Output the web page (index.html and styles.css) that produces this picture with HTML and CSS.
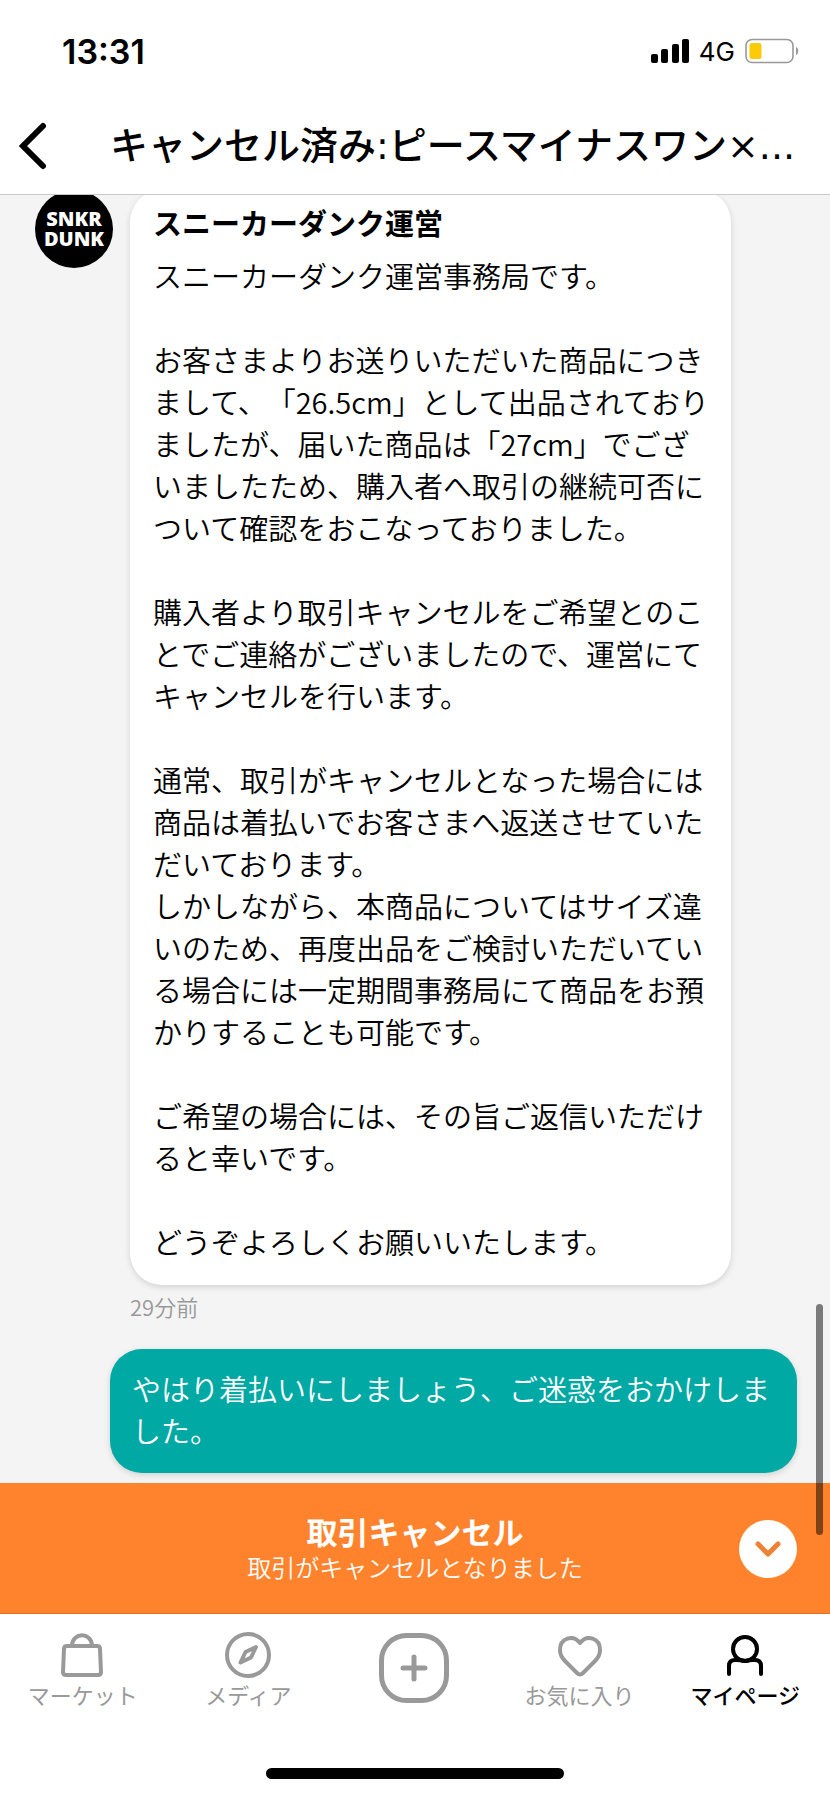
FILE: index.html
```html
<!DOCTYPE html>
<html lang="ja">
<head>
<meta charset="utf-8">
<meta name="viewport" content="width=device-width, initial-scale=1">
<title>キャンセル済み</title>
<link rel="stylesheet" href="styles.css">
</head>
<body>
<div class="status">
  <span class="clock">13:31</span>
  <div class="indicators">
    <svg class="signal" width="38" height="24" viewBox="0 0 38 24" aria-hidden="true">
      <rect x="0" y="15" width="7" height="9" rx="2"/>
      <rect x="10" y="10" width="7" height="14" rx="2"/>
      <rect x="21" y="5" width="7" height="19" rx="2"/>
      <rect x="31" y="0" width="7" height="24" rx="2"/>
    </svg>
    <span class="network">4G</span>
    <svg class="battery" width="54" height="26" viewBox="0 0 54 26" aria-hidden="true">
      <rect x="1" y="1.500" width="47" height="23" rx="6" fill="#fff" stroke="#999" stroke-width="1.600"/>
      <rect x="4.500" y="5" width="12" height="16" rx="2.500" fill="#fbca08"/>
      <path d="M51 9c3 1 3 7 0 8z" fill="#999"/>
    </svg>
  </div>
</div>
<header class="header">
  <button class="back" aria-label="戻る">
    <svg width="28" height="48" viewBox="0 0 28 48"><path d="M24 4 4 24l20 20" fill="none" stroke="#000" stroke-width="6" stroke-linecap="round" stroke-linejoin="miter"/></svg>
  </button>
  <h1 class="title">キャンセル済み:ピースマイナスワン×...</h1>
</header>
<main class="chat">
  <section class="row">
    <div class="avatar"><span>SNKR<br>DUNK</span></div>
    <article class="bubble">
      <h2 class="sender">スニーカーダンク運営</h2>
      <p class="text">スニーカーダンク運営事務局です。

お客さまよりお送りいただいた商品につきまして、「26.5cm」として出品されておりましたが、届いた商品は「27cm」でございましたため、購入者へ取引の継続可否について確認をおこなっておりました。

購入者より取引キャンセルをご希望とのことでご連絡がございましたので、運営にてキャンセルを行います。

通常、取引がキャンセルとなった場合には商品は着払いでお客さまへ返送させていただいております。
しかしながら、本商品についてはサイズ違いのため、再度出品をご検討いただいている場合には一定期間事務局にて商品をお預かりすることも可能です。

ご希望の場合には、その旨ご返信いただけると幸いです。

どうぞよろしくお願いいたします。</p>
    </article>
  </section>
  <time class="time">29分前</time>
  <article class="bubble mine">
    <p class="text">やはり着払いにしましょう、ご迷惑をおかけしました。</p>
  </article>
</main>
<section class="notice">
  <div class="scrollbar"></div>
  <div class="notice-text">
    <strong>取引キャンセル</strong>
    <span>取引がキャンセルとなりました</span>
  </div>
  <button class="expand" aria-label="開く">
    <svg width="30" height="20" viewBox="0 0 30 20"><path d="m5 5 10 10L25 5" fill="none" stroke="#f08134" stroke-width="5" stroke-linecap="round" stroke-linejoin="round"/></svg>
  </button>
</section>
<nav class="tabs">
  <a class="tab" href="#market">
    <svg width="48" height="48" viewBox="0 0 48 48"><path d="M8 15h30q3 0 3 3l1 23q0 3-3 3H7q-3 0-3-3l1-23q0-3 3-3zM13 14C14 1 32 1 33 14"/></svg>
    <span>マーケット</span>
  </a>
  <a class="tab" href="#media">
    <svg width="48" height="48" viewBox="0 0 48 48"><circle cx="24" cy="24" r="21"/><path d="m32 16-10.500 5-5 10.500L27 26.500z"/></svg>
    <span>メディア</span>
  </a>
  <a class="tab" href="#add" aria-label="追加">
    <svg class="plus" width="70" height="70" viewBox="0 0 70 70"><rect x="2.500" y="2.500" width="65" height="65" rx="25"/><path d="M35 24v22M24 35h22"/></svg>
  </a>
  <a class="tab" href="#likes">
    <svg width="48" height="48" viewBox="0 0 48 48"><path d="M24 12C17 3 4 7 4 19c0 5 2 8 5 11l12 12q3 3 6 0l12-12c3-3 5-6 5-11C44 7 31 3 24 12z"/></svg>
    <span>お気に入り</span>
  </a>
  <a class="tab current" href="#mypage">
    <svg width="48" height="48" viewBox="0 0 48 48"><circle cx="24" cy="18" r="12"/><path d="M8 43V35q0-6 6-6h2q4 0 8 1 4-1 8-1h2q6 0 6 6v8"/></svg>
    <span>マイページ</span>
  </a>
</nav>
<div class="home"></div>
</body>
</html>
```
FILE: styles.css
```css
* { box-sizing: border-box; }

body {
  margin: 0;
  height: 100vh;
  display: flex;
  flex-direction: column;
  background: #fff;
  color: #000;
  font-family: "Noto Sans CJK JP", sans-serif;
  text-spacing-trim: space-all;
  text-autospace: no-autospace;
}

h1, h2, p { margin: 0; }

button {
  border: 0;
  padding: 0;
  background: none;
  display: flex;
  align-items: center;
  justify-content: center;
}

.status {
  flex: none;
  height: 102px;
  padding: 0 31px 0 62px;
  display: flex;
  align-items: center;
  justify-content: space-between;
  font-family: Inter, sans-serif;
}

.clock { font-size: 34px; font-weight: 600; }

.indicators { display: flex; align-items: center; gap: 10px; }

.network { font-size: 26px; font-weight: 400; }

.header {
  flex: none;
  height: 93px;
  padding: 0 16px 4px 19px;
  display: flex;
  align-items: center;
  gap: 63px;
  border-bottom: 1px solid #c9c9c9;
}

.title {
  flex: 1;
  min-width: 0;
  font-family: "DejaVu Sans", "Noto Sans CJK JP", sans-serif;
  font-size: 38px;
  line-height: 56px;
  font-weight: 500;
  white-space: nowrap;
  overflow: hidden;
}

.chat {
  flex: 1;
  min-height: 0;
  overflow: hidden;
  padding: 0 33px 10px 35px;
  display: flex;
  flex-direction: column;
  justify-content: flex-end;
  background: #f4f4f5;
}

.row {
  display: flex;
  align-items: flex-start;
  gap: 17px;
  padding-right: 66px;
}

.avatar {
  flex: none;
  width: 78px;
  height: 78px;
  border-radius: 50%;
  background: #000;
  color: #fff;
  display: flex;
  align-items: center;
  justify-content: center;
  font-family: "Open Sans", sans-serif;
  font-size: 20px;
  font-weight: 800;
  line-height: 20px;
  text-align: center;
}

.bubble {
  flex: 1;
  border-radius: 32px;
  padding: 11px 16px 23px 23px;
  background: #fff;
  box-shadow: 0 2px 6px rgba(0, 0, 0, 0.14);
}

.sender {
  margin-bottom: 11px;
  font-size: 29px;
  line-height: 42px;
  font-weight: 700;
}

.text {
  font-size: 29px;
  line-height: 42px;
  font-weight: 350;
  white-space: pre-line;
}

.time {
  margin: 5px 0 27px 95px;
  font-size: 22px;
  line-height: 32px;
  font-weight: 350;
  color: #999;
}

.mine {
  flex: none;
  margin-left: 75px;
  padding: 18px 22px 22px;
  background: #00a9a4;
  color: #fff;
}

.notice {
  position: relative;
  flex: none;
  height: 131px;
  padding: 2px 33px 0 91px;
  display: flex;
  align-items: center;
  background: #ff832d;
  border-bottom: 1px solid #e0702a;
  color: #fff;
}

.notice-text {
  flex: 1;
  display: flex;
  flex-direction: column;
  align-items: center;
}

.notice-text strong { font-size: 31px; line-height: 36px; font-weight: 700; }

.notice-text span { font-size: 24px; line-height: 36px; font-weight: 350; }

.expand {
  width: 58px;
  height: 58px;
  border-radius: 50%;
  background: #fff;
}

.scrollbar {
  position: absolute;
  right: 7px;
  bottom: 78px;
  width: 7px;
  height: 231px;
  border-radius: 4px;
  background: rgba(0, 0, 0, 0.5);
}

.tabs {
  flex: none;
  height: 154px;
  padding: 17px 2px 0 0;
  display: grid;
  grid-template-columns: repeat(5, 1fr);
}

.tab {
  display: flex;
  flex-direction: column;
  align-items: center;
  color: #999;
  font-size: 22px;
  line-height: 30px;
  font-weight: 400;
  text-decoration: none;
}

.tab svg { fill: none; stroke: currentColor; stroke-width: 4; stroke-linejoin: round; stroke-linecap: round; }

.tab .plus { margin-top: 2px; stroke-width: 5; }

.current { color: #000; font-weight: 500; }

.home {
  flex: none;
  width: 36%;
  height: 11px;
  margin: 0 auto 18px;
  border-radius: 6px;
  background: #000;
}
```
